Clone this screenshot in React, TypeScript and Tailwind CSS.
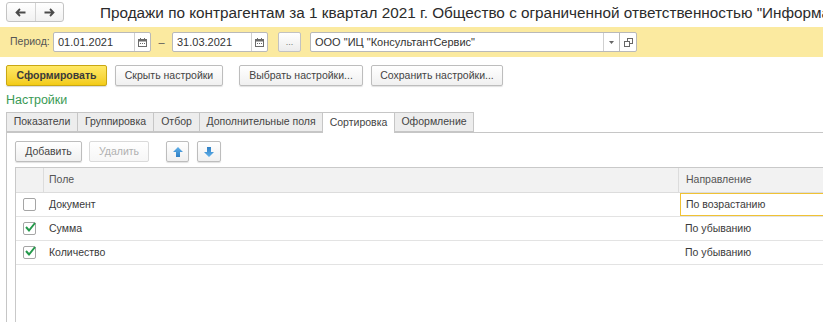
import React from "react";

const tabs = [
  { label: "Показатели", w: "w-[71px]" },
  { label: "Группировка", w: "w-[76px]" },
  { label: "Отбор", w: "w-[46px]" },
  { label: "Дополнительные поля", w: "w-[123px]" },
  { label: "Сортировка", w: "w-[72px]", active: true },
  { label: "Оформление", w: "w-[80px]" },
];

const rows = [
  { field: "Документ", dir: "По возрастанию", checked: false, focused: true },
  { field: "Сумма", dir: "По убыванию", checked: true },
  { field: "Количество", dir: "По убыванию", checked: true },
];

const btn =
  "flex items-center justify-center h-[21px] rounded-[2px] border border-[#bdbdbd] bg-gradient-to-b from-white to-[#f0f0f0] shadow-[0_1px_1px_rgba(0,0,0,0.12)] text-[10.5px] text-[#444]";

function CalendarIcon() {
  return (
    <svg width="9" height="9" viewBox="0 0 9 9">
      <rect x="0.5" y="1.5" width="8" height="7" fill="none" stroke="#6b6b6b" />
      <rect x="0.5" y="1.5" width="8" height="2" fill="#6b6b6b" />
      <rect x="2" y="0" width="1" height="2" fill="#6b6b6b" />
      <rect x="6" y="0" width="1" height="2" fill="#6b6b6b" />
      <rect x="2" y="5" width="1" height="1" fill="#6b6b6b" />
      <rect x="4" y="5" width="1" height="1" fill="#6b6b6b" />
      <rect x="6" y="5" width="1" height="1" fill="#6b6b6b" />
    </svg>
  );
}

function DateField({ value, w }: { value: string; w: string }) {
  return (
    <div className={`flex h-[20px] ${w} shrink-0 rounded-[2px] border border-[#b9b9b9] bg-white`}>
      <div className="flex-1 pl-[4px] text-[11px] leading-[18px] text-[#333]">{value}</div>
      <div className="flex w-[16px] items-center justify-center border-l border-[#d0d0d0]">
        <CalendarIcon />
      </div>
    </div>
  );
}

function Arrow({ up }: { up?: boolean }) {
  return (
    <svg width="10" height="10" viewBox="0 0 10 10" className={up ? "" : "rotate-180"}>
      <defs>
        <linearGradient id={up ? "ga" : "gb"} x1="0" y1="0" x2="0" y2="1">
          <stop offset="0" stopColor="#5fb0ea" />
          <stop offset="1" stopColor="#2f7fc4" />
        </linearGradient>
      </defs>
      <path d="M5 0 L10 5 L7 5 L7 10 L3 10 L3 5 L0 5 Z" fill={`url(#${up ? "ga" : "gb"})`} />
    </svg>
  );
}

function Checkbox({ checked }: { checked: boolean }) {
  return (
    <div className="relative h-[13px] w-[13px] rounded-[2px] border border-[#a5a5a5] bg-white">
      {checked && (
        <svg width="13" height="13" viewBox="0 0 13 13" className="absolute left-[0px] top-[-2px]">
          <path d="M2 6 L5 9.5 L11 2" fill="none" stroke="#23994a" strokeWidth="2" />
        </svg>
      )}
    </div>
  );
}

export default function App() {
  return (
    <div className="h-[322px] w-[823px] overflow-hidden bg-white font-['Liberation_Sans',Arial,sans-serif] text-[#333]">
      {/* заголовок */}
      <div className="flex h-[27px] items-start overflow-hidden whitespace-nowrap">
        <div className="ml-[6px] mt-[2px] flex h-[20px] w-[58px] shrink-0 rounded-[3px] border border-[#c4c4c4] bg-gradient-to-b from-white to-[#f1f1f1]">
          <div className="flex flex-1 items-center justify-center border-r border-[#d4d4d4]">
            <svg width="11" height="9" viewBox="0 0 11 9">
              <path d="M10.5 4.5 H2 M5 1 L1.5 4.5 L5 8" fill="none" stroke="#4a4a4a" strokeWidth="1.8" />
            </svg>
          </div>
          <div className="flex flex-1 items-center justify-center">
            <svg width="11" height="9" viewBox="0 0 11 9">
              <path d="M0.5 4.5 H9 M6 1 L9.5 4.5 L6 8" fill="none" stroke="#4a4a4a" strokeWidth="1.8" />
            </svg>
          </div>
        </div>
        <div className="ml-[36px] min-w-0 flex-1 overflow-hidden text-[15.3px] leading-[26px] text-[#2b2b2b]">
          Продажи по контрагентам за 1 квартал 2021 г. Общество с ограниченной ответственностью "Информа
        </div>
      </div>

      {/* период */}
      <div className="flex h-[30px] items-center bg-[#fbeaa0] pl-[10px]">
        <div className="w-[43px] shrink-0 text-[10.5px] text-[#555]">Период:</div>
        <DateField value="01.01.2021" w="w-[98px]" />
        <div className="flex w-[21px] justify-center text-[11px] text-[#555]">–</div>
        <DateField value="31.03.2021" w="w-[96px]" />
        <div className="ml-[10px] flex h-[20px] w-[23px] items-center justify-center rounded-[2px] border border-[#c2c2c2] bg-gradient-to-b from-white to-[#ececec] text-[9px] leading-none text-[#777]">
          ...
        </div>
        <div className="ml-[9px] flex h-[20px] w-[327px] rounded-[2px] border border-[#b9b9b9] bg-white">
          <div className="flex-1 pl-[4px] text-[11px] leading-[18px] text-[#333]">ООО "ИЦ "КонсультантСервис"</div>
          <div className="flex w-[16px] items-center justify-center border-l border-[#d0d0d0]">
            <svg width="5" height="3" viewBox="0 0 5 3">
              <path d="M0 0 H5 L2.5 3 Z" fill="#666" />
            </svg>
          </div>
          <div className="flex w-[17px] items-center justify-center border-l border-[#b9b9b9]">
            <svg width="9" height="9" viewBox="0 0 9 9">
              <rect x="3.5" y="0.5" width="5" height="5" fill="none" stroke="#666" />
              <rect x="0.5" y="3.5" width="5" height="5" fill="white" stroke="#666" />
            </svg>
          </div>
        </div>
      </div>

      {/* кнопки */}
      <div className="ml-[6px] mt-[8px] flex">
        <div className="flex h-[21px] w-[101px] items-center justify-center rounded-[2px] border border-[#c9a713] bg-gradient-to-b from-[#ffe864] to-[#f3cc12] text-[10.5px] font-bold text-[#3a3a3a] shadow-[0_1px_1px_rgba(0,0,0,0.15)]">
          Сформировать
        </div>
        <div className={`${btn} ml-[8px] w-[108px]`}>Скрыть настройки</div>
        <div className={`${btn} ml-[16px] w-[124px]`}>Выбрать настройки...</div>
        <div className={`${btn} ml-[8px] w-[132px]`}>Сохранить настройки...</div>
      </div>

      <div className="ml-[6px] h-[26px] text-[12.5px] leading-[29px] text-[#3a9a55]">Настройки</div>

      {/* вкладки */}
      <div className="ml-[6px] flex h-[20px]">
        {tabs.map((t) => (
          <div
            key={t.label}
            className={`${t.w} flex items-center justify-center border border-r-0 border-[#c6c6c6] text-[10.5px] text-[#444] last:border-r ${
              t.active ? "relative z-10 h-[21px] border-b-0 bg-white" : "bg-[#ededed]"
            }`}
          >
            {t.label}
          </div>
        ))}
      </div>

      <div className="ml-[6px] h-[200px] border-l border-t border-[#c6c6c6] pl-[8px] pt-[8px]">
        {/* панель команд */}
        <div className="flex">
          <div className={`${btn} w-[67px]`}>Добавить</div>
          <div className="ml-[7px] flex h-[21px] w-[60px] items-center justify-center rounded-[2px] border border-[#dadada] bg-gradient-to-b from-white to-[#f6f6f6] text-[10.5px] text-[#b0b0b0]">
            Удалить
          </div>
          <div className={`${btn} ml-[17px] w-[23px]`}>
            <Arrow up />
          </div>
          <div className={`${btn} ml-[8px] w-[24px]`}>
            <Arrow />
          </div>
        </div>

        {/* таблица */}
        <div className="mt-[5px] h-[200px] w-[900px] border border-[#c9c9c9] text-[10.5px]">
          <div className="flex h-[25px] border-b border-[#dcdcdc] bg-[#f2f2f2] text-[#555]">
            <div className="w-[28px] border-r border-[#dcdcdc]" />
            <div className="flex w-[635px] items-center border-r border-[#dcdcdc] pl-[5px]">Поле</div>
            <div className="flex flex-1 items-center pl-[7px]">Направление</div>
          </div>
          {rows.map((r) => (
            <div key={r.field} className="flex h-[24px] border-b border-[#e3e3e3] text-[#3a3a3a]">
              <div className="flex w-[28px] items-center pl-[7px]">
                <Checkbox checked={r.checked} />
              </div>
              <div className="flex w-[636px] items-center pl-[5px]">{r.field}</div>
              <div
                className={`flex flex-1 items-center pl-[5px] ${
                  r.focused ? "border border-[#f0c234]" : ""
                }`}
              >
                {r.dir}
              </div>
            </div>
          ))}
        </div>
      </div>
    </div>
  );
}
